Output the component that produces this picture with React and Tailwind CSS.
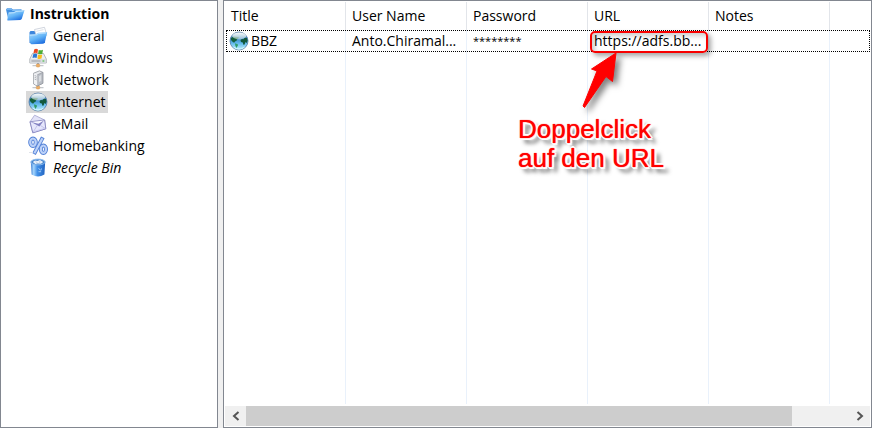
import React from 'react';

function Folder({ paper }) {
  const id = paper ? 'folder-paper' : 'folder-open';
  return (
    <svg viewBox="0 0 20 20" className="h-5 w-5 shrink-0" aria-hidden="true">
      <defs>
        <linearGradient id={id} x1="0" y1="0" x2="0.6" y2="1">
          <stop offset="0" stopColor="#b5e0fd" />
          <stop offset="0.55" stopColor="#64b5f7" />
          <stop offset="1" stopColor="#1f6fe0" />
        </linearGradient>
      </defs>
      {paper ? (
        <>
          <path d="M1.5 17V6.2l1-1.2h4l1 1.5h10L17 17z" fill="#3d86dc" />
          <path d="M6.5 3.5 16.5 1.3l2.3 8L9 12z" fill="#fff" stroke="#c4cad6" strokeWidth="0.8" />
          <path d="M8.3 5.3 15.5 3.6" stroke="#dde2ea" />
          <path d="M1 8.5 8 8.2 10 6.8 19.2 6.3 16.8 16.3Q16.5 17.6 15 17.7L3.8 18.2Q2.6 18.2 2.3 17z" fill={`url(#${id})`} />
          <path d="M1.6 9.2 8.3 8.8 10.3 7.5 18 7" fill="none" stroke="#cdeaff" strokeWidth="0.8" />
        </>
      ) : (
        <>
          <path d="M1 5.5 2 4.3h4.5l1.3 1.3 8.7-.4V14L3.5 16z" fill="#4391e2" />
          <path d="M1.8 6 2.5 5.2h3.6l1.3 1.3 8.5-.3" fill="none" stroke="#8cc7f8" strokeWidth="0.9" />
          <path d="M3.4 8.4 8.9 8 10.6 6.8 19.5 6.3 16.8 14.8Q16.4 15.8 15.2 15.9L3 16.6Q2.3 16.6 2.3 15.7z" fill={`url(#${id})`} />
          <path d="M4 9 9.3 8.7 11 7.5 18.6 7" fill="none" stroke="#cdeaff" strokeWidth="0.8" />
        </>
      )}
    </svg>
  );
}

function Plug() {
  return (
    <>
      <path d="M4.5 17.6h4M11.5 17.6h4" stroke="#c4c7cc" strokeWidth="1.2" />
      <path d="M10 14.5v2" stroke="#858a92" strokeWidth="1.6" />
      <rect x="8.3" y="16" width="3.4" height="3" rx="0.8" fill="#eeb069" stroke="#cf9550" strokeWidth="0.5" />
    </>
  );
}

function WindowsDrive() {
  return (
    <svg viewBox="0 0 20 20" className="h-5 w-5 shrink-0" aria-hidden="true">
      <Plug />
      <path d="M4.5 5.5h11L18.3 11v4H1.8v-4z" fill="#eceef1" stroke="#a4a8af" strokeWidth="0.8" />
      <path d="M2 11h16v3.8H2z" fill="#d9dce0" />
      <path d="M3.5 13h9" stroke="#999da5" />
      <path d="M14.5 13h1.8" stroke="#4fbf49" strokeWidth="1.2" />
      <path d="M6.2 1.4Q8 .2 10 1.4L9.4 5.4Q7.5 4.3 5.4 5.5z" fill="#ea4a25" />
      <path d="M10.7 1.9Q12.8 2.8 15 1.7l-.7 4.1q-2 1.1-4.2 0z" fill="#4cae35" />
      <path d="M5.2 6.3Q7.3 5.1 9.2 6.2L8.6 10Q6.6 8.9 4.5 10.1z" fill="#2878d8" />
      <path d="M10 6.6q2 1 4.2 0l-.7 3.9q-2 1-4.1-.1z" fill="#f9bd21" />
    </svg>
  );
}

function NetworkDrive() {
  return (
    <svg viewBox="0 0 20 20" className="h-5 w-5 shrink-0" aria-hidden="true">
      <Plug />
      <path d="M5.6 3.2 11.4.9l3.4 1.4v11L9.3 16 5.6 14z" fill="#e9ebee" stroke="#8f939b" strokeWidth="0.8" />
      <path d="M9.3 4.8 14.8 2.3v11L9.3 16z" fill="#b9bdc4" stroke="#8b8f97" strokeWidth="0.6" />
      <path d="M5.9 3.4 9.3 4.8v10.8L5.9 13.8z" fill="#f2f3f5" />
      <path d="M6.6 5.5 8.6 6.3M6.6 7.3 8.6 8.1M6.6 9.1 8.6 9.9" stroke="#9da2aa" strokeWidth="0.8" />
      <path d="M11 6 13.2 5v6L11 12z" fill="#dadde1" />
    </svg>
  );
}

function Globe({ id }) {
  return (
    <svg viewBox="0 0 20 20" className="h-5 w-5 shrink-0" aria-hidden="true">
      <defs>
        <linearGradient id={id} x1="0" y1="0" x2="0" y2="1">
          <stop offset="0" stopColor="#7da7c4" />
          <stop offset="0.35" stopColor="#3d84c4" />
          <stop offset="0.6" stopColor="#5cb5ea" />
          <stop offset="1" stopColor="#c4f5ff" />
        </linearGradient>
        <linearGradient id={`${id}-shine`} x1="0" y1="0" x2="0" y2="1">
          <stop offset="0" stopColor="#fff" stopOpacity="0.95" />
          <stop offset="1" stopColor="#e3f2ee" stopOpacity="0.5" />
        </linearGradient>
      </defs>
      <circle cx="10" cy="10" r="9" fill={`url(#${id})`} stroke="#4f78a3" strokeWidth="0.8" />
      <path d="M2 7 4.5 5.5 9.5 6 9.8 7 7.8 8.2 7.8 9.6 6 10.4 5.2 11.8 3.8 11 2 9z" fill="#14603c" />
      <path d="M6 12.2 8.8 13.2 8.8 14.8 7.4 17 6.3 14.6z" fill="#2f9c6a" />
      <path d="M11.5 9.2 12.8 8 14.6 8.2 15.4 6.8 17.9 7 18.6 9.4 17.7 12 16.4 11 15.6 13.6 14.4 13.8 13.8 11.4 12 11z" fill="#12593c" />
      <ellipse cx="10.2" cy="4.9" rx="7" ry="3.5" fill={`url(#${id}-shine)`} />
      <path d="M4.5 16.2Q10 20 15.5 16.2" fill="none" stroke="#d8fcff" strokeWidth="0.9" />
    </svg>
  );
}

function Mail() {
  return (
    <svg viewBox="0 0 20 20" className="h-5 w-5 shrink-0" aria-hidden="true">
      <path d="M2 7.8 6.6 1.2 16.6 6 17.8 14.8 4.8 18.8z" fill="#e2e3f8" stroke="#a3a3cf" strokeWidth="0.8" />
      <path d="M2 7.8 16.6 6 17.8 14.8 4.8 18.8z" fill="#e6e7fc" stroke="#7b7ab8" strokeWidth="0.8" />
      <path d="M3.2 8 15.9 6.5 11.4 12.6z" fill="#8382c2" />
      <path d="M3.2 8 15.9 6.5 10.4 9.8z" fill="#f8f8ff" />
      <path d="M4.9 18.5 9.4 11.2M17.5 14.7 12.3 11.4" stroke="#b3b3df" strokeWidth="0.7" />
      <path d="M5.4 17.6 17 14.2" stroke="#c9caf3" strokeWidth="0.8" />
    </svg>
  );
}

function Percent() {
  return (
    <svg viewBox="0 0 20 20" className="h-5 w-5 shrink-0" aria-hidden="true">
      <g fill="none" stroke="#5280d6" strokeWidth="4">
        <ellipse cx="5" cy="6.2" rx="2.8" ry="3.7" />
        <ellipse cx="15.4" cy="13.2" rx="2.6" ry="3.7" />
        <path d="M14.8 1.4 6 18" />
      </g>
      <g fill="none" stroke="#bdd2f8" strokeWidth="2.2">
        <ellipse cx="5" cy="6.2" rx="2.8" ry="3.7" />
        <ellipse cx="15.4" cy="13.2" rx="2.6" ry="3.7" />
        <path d="M14.4 2.2 6.4 17.2" />
      </g>
      <path d="M1 16.5h4" stroke="#dfe3ea" />
    </svg>
  );
}

function Bin() {
  return (
    <svg viewBox="0 0 20 20" className="h-5 w-5 shrink-0" aria-hidden="true">
      <defs>
        <linearGradient id="bin-body">
          <stop offset="0" stopColor="#3f7fd2" />
          <stop offset="0.2" stopColor="#a5d5fc" />
          <stop offset="0.45" stopColor="#4391e8" />
          <stop offset="1" stopColor="#2163c0" />
        </linearGradient>
      </defs>
      <path d="M2.8 3.8 3.6 16.6Q10 20.6 16.4 16.6L17.2 3.8z" fill="url(#bin-body)" />
      <ellipse cx="10" cy="4" rx="7.2" ry="2.9" fill="#4a86cc" stroke="#8bbdf0" strokeWidth="0.9" />
      <path d="M4.8 4 7 2.4 9.5 3 12 2 15.2 4 13 5.7 9.7 5.4 7.3 6z" fill="#e9f1fa" />
      <path d="M7.5 3.6 9.6 5M12 2.8 11.5 4.8" stroke="#a9c0da" strokeWidth="0.7" />
      <path d="M10.6 10.2l1.5 1.8M13.5 10.5l-.8 2M10.5 13.7h2.6" stroke="#a8d2fb" strokeWidth="0.9" />
    </svg>
  );
}

const groups = [
  { name: 'General', icon: <Folder paper /> },
  { name: 'Windows', icon: <WindowsDrive /> },
  { name: 'Network', icon: <NetworkDrive /> },
  { name: 'Internet', icon: <Globe id="globe-group" />, selected: true },
  { name: 'eMail', icon: <Mail /> },
  { name: 'Homebanking', icon: <Percent /> },
  { name: 'Recycle Bin', icon: <Bin />, italic: true },
];

function GroupTree() {
  return (
    <nav aria-label="Groups" className="w-[218px] shrink-0 border border-[#828790] bg-white pt-0.5 pl-1">
      <button type="button" className="flex h-[22px] items-center gap-[5px] font-bold">
        <Folder />
        Instruktion
      </button>
      <ul className="pl-[21px]">
        {groups.map((g) => (
          <li key={g.name}>
            <button
              type="button"
              className={`flex h-[22px] items-center gap-[5px] pr-0.5 pl-0.5 ${g.selected ? 'bg-[#d9d9d9]' : ''} ${g.italic ? 'italic' : ''}`}
            >
              {g.icon}
              {g.name}
            </button>
          </li>
        ))}
      </ul>
    </nav>
  );
}

function Callout() {
  return (
    <div className="pointer-events-none absolute top-px left-0.5 z-10">
      <div className="h-[22px] w-[118px] rounded-[5px] border-2 border-[#f80000] shadow-[3px_3px_5px_rgba(0,0,0,0.35),inset_3px_3px_5px_rgba(0,0,0,0.2)]" />
      <svg
        viewBox="0 0 36 58"
        className="absolute top-[21px] -left-2 h-[58px] w-9 drop-shadow-[4px_4px_3px_rgba(0,0,0,0.5)]"
        aria-hidden="true"
      >
        <path d="M34 1 30.5 29.5 24 24.5 2.5 55.5 1 54 15 19 9.5 17z" fill="#ff0000" stroke="#ff0000" strokeLinejoin="round" />
      </svg>
      <p className="absolute top-[84px] -left-[72px] font-['Liberation_Sans',Arial,sans-serif] text-[26px] leading-[29px] whitespace-nowrap text-[#ff0000] [text-shadow:0_0_1px_#f00,2px_0_0_#fff,-2px_0_0_#fff,0_2px_0_#fff,0_-2px_0_#fff,1px_1px_0_#fff,-1px_1px_0_#fff,1px_-1px_0_#fff,-1px_-1px_0_#fff,2px_2px_1px_#fff,5px_5px_4px_rgba(0,0,0,0.7)]">
        Doppelclick
        <br />
        auf den URL
      </p>
    </div>
  );
}

const columns = ['Title', 'User Name', 'Password', 'URL', 'Notes'];

function EntryTable() {
  return (
    <table className="h-full w-full table-fixed border-separate border-spacing-0 text-left">
      <colgroup>
        <col className="w-[120px]" />
        <col className="w-[121px]" />
        <col className="w-[121px]" />
        <col className="w-[121px]" />
        <col className="w-[121px]" />
        <col />
      </colgroup>
      <thead>
        <tr className="h-7">
          {columns.map((c) => (
            <th key={c} scope="col" className="border-r border-[#e2e5ea] pr-1 pl-1.5 font-normal first:pl-[5px]">
              {c}
            </th>
          ))}
          <td />
        </tr>
      </thead>
      <tbody>
        <tr className="h-[22px] outline-1 -outline-offset-1 outline-black outline-dotted">
          <td className="border-r border-[#e9f1fb] pl-[3px]">
            <div className="flex h-[22px] items-center gap-0.5">
              <Globe id="globe-entry" />
              BBZ
            </div>
          </td>
          <td className="border-r border-[#e9f1fb] pl-1.5 whitespace-nowrap">Anto.Chiramal...</td>
          <td className="border-r border-[#e9f1fb] pl-1.5 text-[11px]">********</td>
          <td className="relative border-r border-[#e9f1fb] pl-1.5 whitespace-nowrap">
            <a href="#url">https://adfs.bb...</a>
            <Callout />
          </td>
          <td className="border-r border-[#e9f1fb]" />
          <td />
        </tr>
        <tr aria-hidden="true">
          {columns.map((c) => (
            <td key={c} className="border-r border-[#e9f1fb]" />
          ))}
          <td />
        </tr>
      </tbody>
    </table>
  );
}

function ScrollBar() {
  return (
    <div className="flex h-5 shrink-0 bg-[#f0f0f0]">
      <button type="button" aria-label="Scroll left" className="flex w-[21px] items-center justify-center">
        <svg viewBox="0 0 8 10" className="h-2.5 w-2" aria-hidden="true">
          <path d="M6.5 1 2 5l4.5 4" fill="none" stroke="#555" strokeWidth="2" />
        </svg>
      </button>
      <div className="flex flex-1">
        <div className="w-19/21 bg-[#cdcdcd]" />
      </div>
      <button type="button" aria-label="Scroll right" className="flex w-[21px] items-center justify-center">
        <svg viewBox="0 0 8 10" className="h-2.5 w-2" aria-hidden="true">
          <path d="M1.5 1 6 5 1.5 9" fill="none" stroke="#555" strokeWidth="2" />
        </svg>
      </button>
    </div>
  );
}

export default function App() {
  return (
    <div className="flex h-screen gap-[5px] bg-[#f0f0f0] font-['Open_Sans','Noto_Sans',sans-serif] text-[14px] leading-5 text-black">
      <GroupTree />
      <main className="flex min-w-0 flex-1 flex-col border border-[#828790] bg-white p-px">
        <div className="min-h-0 flex-1 pb-0.5 pl-px">
          <EntryTable />
        </div>
        <ScrollBar />
      </main>
    </div>
  );
}
